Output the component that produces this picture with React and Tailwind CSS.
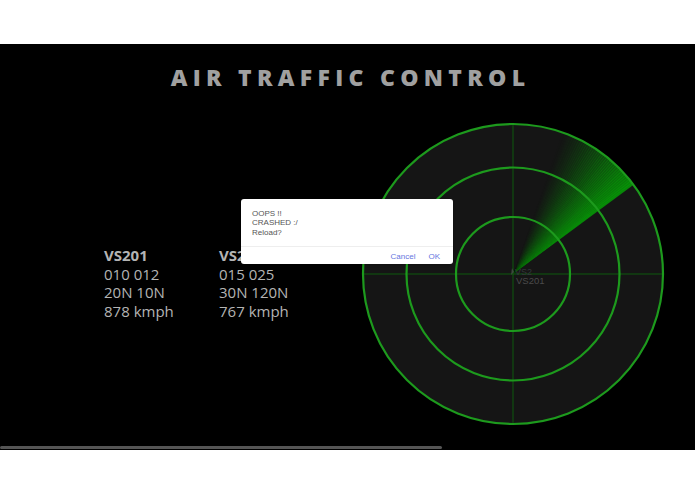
import React from 'react'

const flights = [
  { id: 'VS201', pos: '010 012', coord: '20N 10N', speed: '878 kmph' },
  { id: 'VS202', pos: '015 025', coord: '30N 120N', speed: '767 kmph' },
]

const CX = 152
const CY = 152
const R = 150

const pt = (deg, r = R) => {
  const a = (deg * Math.PI) / 180
  return [CX + r * Math.cos(a), CY - r * Math.sin(a)]
}

// sweep beam, faded with thin slices since svg has no conic gradient
const sweep = () => {
  const start = 36.5
  const span = 34
  const n = 40
  const out = []
  for (let i = 0; i < n; i++) {
    const a0 = start + (span / n) * i
    const a1 = a0 + span / n + 0.3
    const t = i / n
    const [x0, y0] = pt(a0)
    const [x1, y1] = pt(a1)
    out.push(
      <path
        key={i}
        d={`M${CX} ${CY} L${x0} ${y0} A${R} ${R} 0 0 0 ${x1} ${y1} Z`}
        fill="#069a06"
        fillOpacity={0.85 * Math.pow(1 - t, 1.3)}
      />
    )
  }
  return out
}

const Radar = () => (
  <svg width="304" height="304" viewBox="0 0 304 304" className="block">
    <circle cx={CX} cy={CY} r={R} fill="#151515" />
    {sweep()}
    <line x1={CX} y1={CY - R} x2={CX} y2={CY + R} stroke="#0e5a0e" strokeWidth="1" />
    <line x1={CX - R} y1={CY} x2={CX + R} y2={CY} stroke="#0e5a0e" strokeWidth="1" />
    <circle cx={CX} cy={CY} r={57} fill="none" stroke="#1d9a1d" strokeWidth="2.2" />
    <circle cx={CX} cy={CY} r={106.5} fill="none" stroke="#1d9a1d" strokeWidth="2.2" />
    <circle cx={CX} cy={CY} r={R} fill="none" stroke="#1d9a1d" strokeWidth="2.2" />
    <path d="M151 146 l2 4 l-3 3 z" fill="#3d4a3d" />
    <text x={CX + 2} y={CY + 1} fontSize="9" fill="#33383a" fontFamily="Liberation Sans, sans-serif">
      VS2
    </text>
    <text x={CX + 3} y={CY + 10} fontSize="9.5" fill="#4a4a4a" fontFamily="Liberation Sans, sans-serif">
      VS201
    </text>
  </svg>
)

const FlightInfo = ({ flight }) => (
  <div className="w-[115px] text-[15px] leading-[18.5px] font-medium text-[#b4b4b4]">
    <p className="font-bold">{flight.id}</p>
    <p>{flight.pos}</p>
    <p>{flight.coord}</p>
    <p>{flight.speed}</p>
  </div>
)

const CrashDialog = () => (
  <div className="absolute left-[241px] top-[155px] w-[212px] h-[65px] rounded-[3px] bg-white font-['Liberation_Sans',sans-serif] shadow">
    <div className="h-[47px] pl-[11px] pt-[10px] text-[8px] leading-[9.4px] text-[#555]">
      <p>OOPS !!</p>
      <p>CRASHED :/</p>
      <p>Reload?</p>
    </div>
    <div className="border-t border-[#eee] flex justify-end items-center gap-[13px] pr-[13px] pt-[4px] text-[8px] text-[#6676e0]">
      <span>Cancel</span>
      <span>OK</span>
    </div>
  </div>
)

export default function App() {
  return (
    <div className="w-[695px] h-[494px] bg-white font-['Open_Sans',sans-serif]">
      <div className="h-[44px]" />
      <div className="relative h-[406px] bg-black flex flex-col">
        <h1 className="pt-[19px] text-center text-[23px] leading-[28px] font-extrabold tracking-[0.23em] pl-[6px] text-[#a0a0a0]">
          AIR TRAFFIC CONTROL
        </h1>
        <div className="flex items-start mt-[31px]">
          <div className="flex ml-[104px] mt-[124px]">
            {flights.map((f) => (
              <FlightInfo key={f.id} flight={f} />
            ))}
          </div>
          <div className="ml-auto mr-[30px]">
            <Radar />
          </div>
        </div>
        <div className="mt-auto mb-[1px] h-[3px] w-[442px] rounded-full bg-[#555]" />
        <CrashDialog />
      </div>
    </div>
  )
}
